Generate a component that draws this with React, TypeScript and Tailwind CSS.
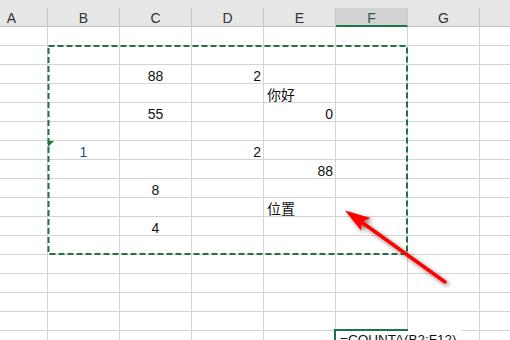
import React from "react";

type Align = "left" | "center" | "right";
type Cell = { t: string; a: Align; blue?: boolean; tri?: boolean };

const cols = ["A", "B", "C", "D", "E", "F", "G", "H"];
const widths = ["w-[48px]", "w-[72px]", "w-[72px]", "w-[72px]", "w-[72px]", "w-[72px]", "w-[72px]", "w-[72px]"];

const data: Record<number, Record<string, Cell>> = {
  3: { C: { t: "88", a: "center" }, D: { t: "2", a: "right" } },
  4: { E: { t: "你好", a: "left" } },
  5: { C: { t: "55", a: "center" }, E: { t: "0", a: "right" } },
  7: { B: { t: "1", a: "center", blue: true, tri: true }, D: { t: "2", a: "right" } },
  8: { E: { t: "88", a: "right" } },
  9: { C: { t: "8", a: "center" } },
  10: { E: { t: "位置", a: "left" } },
  11: { C: { t: "4", a: "center" } },
};

const alignCls: Record<Align, string> = {
  left: "justify-start pl-[3px]",
  center: "justify-center",
  right: "justify-end pr-[2px]",
};

export default function App() {
  const rows = Array.from({ length: 17 }, (_, i) => i + 1);
  return (
    <div
      className="relative w-[510px] h-[340px] overflow-hidden bg-white"
      style={{ fontFamily: '"Liberation Sans", "Noto Sans CJK SC", sans-serif' }}
    >
      {/* header */}
      <div className="h-[27px] bg-[#e6e6e6] flex flex-col">
        <div className="h-[8px] shrink-0" />
        <div className="flex h-[19px] shrink-0">
          {cols.map((c, i) => {
            const sel = c === "F";
            return (
              <div
                key={c}
                className={`${widths[i]} shrink-0 h-[19px] flex justify-center text-[14px] leading-[18px] pt-[1px] border-r border-[#c8c8c8] ${
                  sel
                    ? "bg-[#d2d2d2] border-b-2 border-b-[#217346] text-[#2f5d3c]"
                    : "border-b border-b-[#c0c0c0] text-[#333333]"
                }`}
              >
                {c !== "H" && (
                  <span className={i === 0 ? "-translate-x-[12px] inline-block" : ""}>{c}</span>
                )}
              </div>
            );
          })}
        </div>
      </div>

      {/* grid */}
      <div className="flex flex-col">
        {rows.map((r) => (
          <div key={r} className="flex h-[19px] shrink-0">
            {cols.map((c, i) => {
              const cell = data[r]?.[c];
              return (
                <div
                  key={c}
                  className={`${widths[i]} shrink-0 h-[19px] relative flex border-r border-b border-[#d4d4d4] text-[14px] leading-[19px] pt-[2px] text-[#111111] ${
                    cell ? alignCls[cell.a] : ""
                  }`}
                >
                  {cell?.tri && (
                    <div className="absolute left-0 top-0 w-0 h-0 border-t-[6px] border-r-[6px] border-t-[#1d7a3a] border-r-transparent" />
                  )}
                  {cell && (
                    <span className={`whitespace-nowrap ${cell.blue ? "text-[#1b4f8f]" : ""}`}>{cell.t}</span>
                  )}
                </div>
              );
            })}
          </div>
        ))}
      </div>

      {/* marquee + arrow overlay */}
      <svg className="absolute left-0 top-0 pointer-events-none" width="510" height="340" viewBox="0 0 510 340">
        <defs>
          <filter id="sh" x="-20%" y="-20%" width="140%" height="140%">
            <feDropShadow dx="2" dy="2" stdDeviation="2" floodColor="#000" floodOpacity="0.5" />
          </filter>
        </defs>
        <rect
          x="48.5"
          y="46"
          width="358.5"
          height="208"
          fill="none"
          stroke="#217346"
          strokeWidth="2"
          strokeDasharray="6 3"
        />
        <g filter="url(#sh)">
          <line x1="445" y1="282" x2="358" y2="219.5" stroke="#ff0000" strokeWidth="3.5" strokeLinecap="round" />
          <polygon points="345,210.5 370.5,218 362,222 361,230.5" fill="#ff0000" />
        </g>
      </svg>

      {/* editing cell */}
      <div className="absolute z-10 left-[334px] top-[329px] w-[128px] h-[14px] bg-white border-l-2 border-[#217346] pl-[4px]">
        <div className="absolute left-[-2px] top-0 w-[74px] h-[2px] bg-[#217346]" />
        <span className="block text-[13.5px] leading-[19px] pt-[1px] whitespace-nowrap text-[#111111]">
          =COUNTA(B2:F12)
        </span>
      </div>
    </div>
  );
}
